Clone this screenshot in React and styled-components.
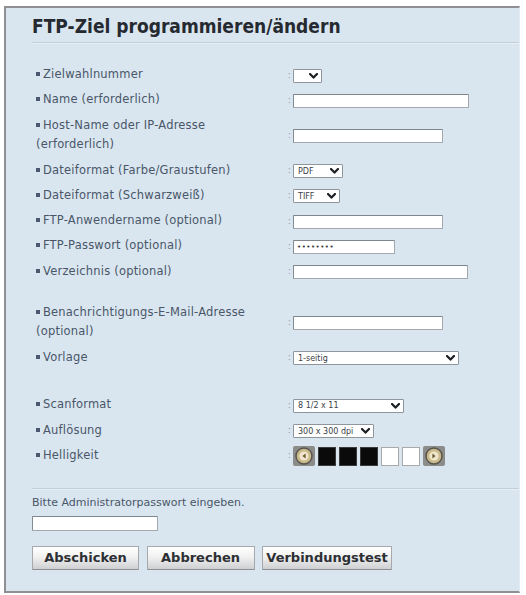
import React from "react";
import styled, { createGlobalStyle } from "styled-components";

const GlobalStyle = createGlobalStyle`
  html, body {
    margin: 0;
    padding: 0;
    background: #ffffff;
  }
  body {
    font-family: "DejaVu Sans", Verdana, sans-serif;
  }
`;

const Frame = styled.div`
  box-sizing: border-box;
  margin: 6px 0 0 4px;
  width: 516px;
  height: 587px;
  background: #d9e6f0;
  border: 2px solid #8e9094;
  border-right: 1px solid #e4ecf2;
  padding: 0 0 0 26px;
`;

const Title = styled.h1`
  margin: 0;
  padding: 5.5px 0 4.5px;
  font-family: "DejaVu Sans Condensed", "DejaVu Sans", Verdana, sans-serif;
  font-stretch: condensed;
  font-size: 19px;
  line-height: 24px;
  font-weight: bold;
  color: #262a30;
  border-bottom: 1px solid #c2cfda;
  box-shadow: 0 1px 0 #e9f0f5;
`;

const Rows = styled.div`
  margin-top: 19px;
`;

const Row = styled.div`
  display: grid;
  grid-template-columns: 256px 5px auto;
  align-items: center;
  height: ${(p) => (p.$tall ? 45 : 25.25)}px;
`;

const Spacer = styled.div`
  height: ${(p) => p.$h}px;
`;

const Label = styled.div`
  padding-left: 4px;
  font-size: 11.5px;
  letter-spacing: 0.2px;
  line-height: 19px;
  color: #4a5668;
  white-space: nowrap;

  &::before {
    content: "";
    display: inline-block;
    width: 4px;
    height: 4px;
    margin: 0 3px 1px 0;
    background: #4a5870;
    vertical-align: middle;
  }
`;

const Marker = styled.span`
  font-size: 8px;
  line-height: 8px;
  color: #8a8f96;
  padding-top: 2px;
`;

const Cell = styled.div`
  display: flex;
  align-items: center;
  padding-top: 2px;
`;

const TextBox = styled.input`
  box-sizing: border-box;
  width: ${(p) => p.$w}px;
  height: ${(p) => p.$h || 14}px;
  margin: 0;
  padding: 0 3px;
  border: 1px solid #a3a8ae;
  border-top-color: #7f858c;
  border-left-color: #858b92;
  border-radius: 1px;
  background: #ffffff;
  font-family: "DejaVu Sans", Verdana, sans-serif;
  font-size: 7px;
  letter-spacing: 0.5px;
  color: #333;
  outline: none;
`;

const Dropdown = styled.div`
  box-sizing: border-box;
  display: flex;
  align-items: center;
  justify-content: space-between;
  width: ${(p) => p.$w}px;
  height: 14px;
  padding: 0 3px 0 4px;
  border: 1px solid #8f959c;
  border-radius: 1px;
  background: #ffffff;
  font-size: 8px;
  color: #3a3f46;
  white-space: nowrap;
`;

const Chevron = () => (
  <svg width="9" height="6" viewBox="0 0 9 6">
    <polyline
      points="1,1 4.5,4.6 8,1"
      fill="none"
      stroke="#1c1f24"
      strokeWidth="2.2"
      strokeLinecap="round"
      strokeLinejoin="round"
    />
  </svg>
);

const Select = ({ w, value }) => (
  <Dropdown $w={w}>
    <span>{value}</span>
    <Chevron />
  </Dropdown>
);

const Slider = styled.div`
  display: flex;
  align-items: center;
  gap: 3px;
  height: 20px;
`;

const Step = styled.div`
  box-sizing: border-box;
  width: 18px;
  height: 19px;
  background: ${(p) => (p.$on ? "#0a0a0a" : "#ffffff")};
  border: 1px solid ${(p) => (p.$on ? "#3a3a3a" : "#a9a9a9")};
`;

const Knob = ({ dir }) => (
  <svg width="22" height="20" viewBox="0 0 22 20">
    <rect x="0" y="0" width="22" height="20" fill="#8c8c8a" rx="2" />
    <circle cx="11" cy="10" r="8" fill="#c9b98c" stroke="#55534c" strokeWidth="1.4" />
    <circle cx="11" cy="10" r="4.6" fill="#efe6cc" />
    <path
      d={dir === "left" ? "M12.6 7.6 L9.4 10 L12.6 12.4 Z" : "M9.4 7.6 L12.6 10 L9.4 12.4 Z"}
      fill="#6b5d3a"
    />
  </svg>
);

const Divider = styled.div`
  margin-top: 20px;
  border-top: 1px solid #c2cfda;
  box-shadow: 0 1px 0 #e9f0f5;
`;

const AdminNote = styled.div`
  margin-top: 7px;
  font-size: 11px;
  line-height: 14px;
  color: #4a5668;
`;

const AdminInput = styled(TextBox)`
  margin-top: 2px;
`;

const Buttons = styled.div`
  display: flex;
  gap: 7.5px;
  margin-top: 15px;
`;

const Button = styled.button`
  box-sizing: border-box;
  width: ${(p) => p.$w}px;
  height: 24px;
  margin: 0;
  padding: 0;
  border: 1px solid #a5a8ac;
  border-bottom-color: #8b8e92;
  border-radius: 1px;
  background: linear-gradient(#ffffff 0%, #f1f1f1 45%, #cfd0d2 100%);
  font-family: "DejaVu Sans", Verdana, sans-serif;
  font-size: 13px;
  font-weight: bold;
  color: #2c2f33;
`;

const fields = [
  { label: "Zielwahlnummer", select: { w: 29, value: "" } },
  { label: "Name (erforderlich)", input: 176 },
  { label: ["Host-Name oder IP-Adresse", "(erforderlich)"], input: 150 },
  { label: "Dateiformat (Farbe/Graustufen)", select: { w: 50, value: "PDF" } },
  { label: "Dateiformat (Schwarzweiß)", select: { w: 47, value: "TIFF" } },
  { label: "FTP-Anwendername (optional)", input: 150 },
  { label: "FTP-Passwort (optional)", input: 102, password: true },
  { label: "Verzeichnis (optional)", input: 175 },
  { gap: 15.75 },
  { label: ["Benachrichtigungs-E-Mail-Adresse", "(optional)"], input: 150 },
  { label: "Vorlage", select: { w: 166, value: "1-seitig" } },
  { gap: 22.6 },
  { label: "Scanformat", select: { w: 111, value: "8 1/2 x 11" } },
  { label: "Auflösung", select: { w: 81, value: "300 x 300 dpi" } },
  { label: "Helligkeit", slider: [true, true, true, false, false] },
];

function Control({ field }) {
  if (field.select) return <Select w={field.select.w} value={field.select.value} />;
  if (field.slider)
    return (
      <Slider>
        <Knob dir="left" />
        {field.slider.map((on, i) => (
          <Step key={i} $on={on} />
        ))}
        <Knob dir="right" />
      </Slider>
    );
  return (
    <TextBox
      $w={field.input}
      type={field.password ? "password" : "text"}
      defaultValue={field.password ? "password" : ""}
    />
  );
}

export default function App() {
  return (
    <>
      <GlobalStyle />
      <Frame>
        <Title>FTP-Ziel programmieren/ändern</Title>
        <Rows>
          {fields.map((field, i) => {
            if (field.gap) return <Spacer key={i} $h={field.gap} />;
            const tall = Array.isArray(field.label);
            return (
              <Row key={i} $tall={tall}>
                <Label>
                  {tall ? (
                    <>
                      {field.label[0]}
                      <br />
                      {field.label[1]}
                    </>
                  ) : (
                    field.label
                  )}
                </Label>
                <Marker>:</Marker>
                <Cell>
                  <Control field={field} />
                </Cell>
              </Row>
            );
          })}
        </Rows>
        <Divider />
        <AdminNote>Bitte Administratorpasswort eingeben.</AdminNote>
        <AdminInput $w={126} $h={15} type="password" />
        <Buttons>
          <Button $w={107}>Abschicken</Button>
          <Button $w={108}>Abbrechen</Button>
          <Button $w={130}>Verbindungstest</Button>
        </Buttons>
      </Frame>
    </>
  );
}
